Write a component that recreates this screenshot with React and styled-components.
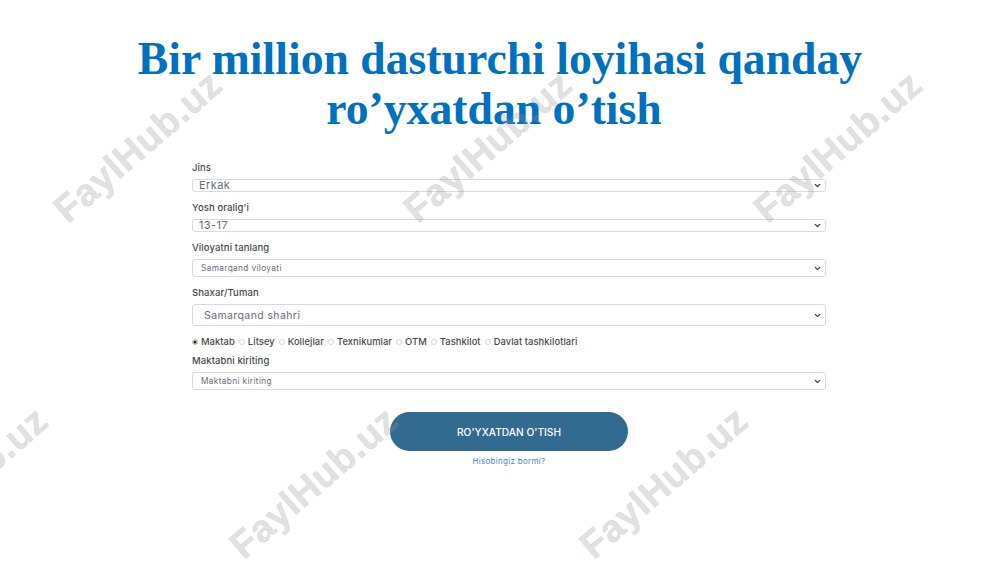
import styled, { createGlobalStyle } from "styled-components";
import { ChevronDown } from "lucide-react";

const GlobalStyle = createGlobalStyle`
  html, body {
    margin: 0;
    background: #fff;
  }
  body {
    width: 1000px;
    height: 562px;
    overflow: hidden;
  }
`;

const marks = [
  { x: 138, y: 147 },
  { x: 488, y: 147 },
  { x: 838, y: 147 },
  { x: -36, y: 483 },
  { x: 314, y: 483 },
  { x: 664, y: 483 },
];

const schools = ["Maktab", "Litsey", "Kollejlar", "Texnikumlar", "OTM", "Tashkilot", "Davlat tashkilotlari"];

const Field = ({ size, value }) => {
  return (
    <SelectBox>
      <Select $size={size} defaultValue={value}>
        <option>{value}</option>
      </Select>
      <Chevron size={9} strokeWidth={3.5} />
    </SelectBox>
  );
};

const App = () => {
  return (
    <Page>
      <GlobalStyle />
      <Title>
        Bir million dasturchi loyihasi qanday
        <SecondLine>ro’yxatdan o’tish</SecondLine>
      </Title>
      <Form>
        <Label>Jins</Label>
        <Field size="xs" value="Erkak" />
        <Label $top={9}>Yosh oralig'i</Label>
        <Field size="xs" value="13-17" />
        <Label $top={9}>Viloyatni tanlang</Label>
        <Field size="sm" value="Samarqand viloyati" />
        <Label $top={9}>Shaxar/Tuman</Label>
        <Field size="lg" value="Samarqand shahri" />
        <RadioRow>
          {schools.map((name, i) => (
            <RadioLabel key={name}>
              <Radio type="radio" name="school" defaultChecked={i === 0} />
              {name}
            </RadioLabel>
          ))}
        </RadioRow>
        <Label $top={6}>Maktabni kiriting</Label>
        <Field size="sm" value="Maktabni kiriting" />
        <Submit type="button">RO'YXATDAN O'TISH</Submit>
        <Login href="#">Hisobingiz bormi?</Login>
      </Form>
      {marks.map((m) => (
        <Watermark key={m.x} style={{ left: m.x, top: m.y }}>
          FaylHub.uz
        </Watermark>
      ))}
    </Page>
  );
};

export default App;

const Page = styled.div`
  position: relative;
  width: 1000px;
  height: 562px;
  overflow: hidden;
  padding-top: 34px;
  box-sizing: border-box;
  font-family: "Inter", "Liberation Sans", sans-serif;
`;

const Title = styled.h1`
  margin: 0;
  text-align: center;
  font-family: "Liberation Serif", serif;
  font-size: 45.7px;
  line-height: 50px;
  font-weight: 700;
  color: #0070c0;
`;

const SecondLine = styled.span`
  display: block;
  padding-right: 12px;
`;

const Form = styled.form`
  display: flex;
  flex-direction: column;
  width: 634px;
  margin: 27px 0 0 192px;
`;

const Label = styled.label`
  display: block;
  height: 13px;
  line-height: 13px;
  margin: ${(p) => p.$top || 0}px 0 5px;
  font-size: 9.5px;
  font-weight: 500;
  letter-spacing: 0.1px;
  color: #4a4a4a;
`;

const SelectBox = styled.div`
  position: relative;
  display: flex;
`;

const sizes = {
  xs: "height: 13px; font-size: 11px; padding: 0 0 1px 6px; letter-spacing: 0.4px; line-height: 1;",
  sm: "height: 18px; font-size: 8.3px; padding: 0 0 0 8px; letter-spacing: 0.35px; line-height: normal;",
  lg: "height: 22px; font-size: 10.5px; padding: 0 0 0 11px; letter-spacing: 0.4px; line-height: normal;",
};

const Select = styled.select`
  appearance: none;
  box-sizing: border-box;
  width: 100%;
  ${(p) => sizes[p.$size]}
  font-family: "Inter", "Liberation Sans", sans-serif;
  color: #666e76;
  background-color: #fff;
  border: 1px solid #d8dadd;
  border-radius: 3px;
`;

const Chevron = styled(ChevronDown)`
  position: absolute;
  right: 1px;
  top: 50%;
  margin: -4.5px 3px 0 0;
  color: #3c4045;
  pointer-events: none;
`;

const RadioRow = styled.div`
  display: flex;
  align-items: center;
  gap: 4px;
  height: 13px;
  margin-top: 9px;
`;

const RadioLabel = styled.label`
  display: flex;
  align-items: center;
  gap: 3px;
  font-size: 9.4px;
  font-weight: 500;
  letter-spacing: 0.06px;
  color: #4a4a4a;
`;

const Radio = styled.input`
  appearance: none;
  box-sizing: border-box;
  width: 6px;
  height: 6px;
  margin: 0;
  border: 1px solid #d5d5d5;
  border-radius: 50%;
  background: #fff;

  &:checked {
    border: 1px solid #ccc;
    background: #222;
    box-shadow: inset 0 0 0 0.5px #fff;
  }
`;

const Submit = styled.button`
  align-self: center;
  width: 238px;
  height: 39px;
  margin-top: 22px;
  border: none;
  border-radius: 20px;
  background: #326a90;
  color: #fff;
  font-family: "Inter", "Liberation Sans", sans-serif;
  font-size: 10.2px;
  font-weight: 500;
`;

const Login = styled.a`
  align-self: center;
  margin-top: 5px;
  font-size: 8px;
  line-height: 11px;
  letter-spacing: 0.3px;
  color: #4a80e0;
  text-decoration: none;
`;

const Watermark = styled.div`
  position: absolute;
  transform: translate(-50%, -50%) rotate(-41deg);
  font-family: "Liberation Sans", sans-serif;
  font-size: 38px;
  font-weight: 700;
  letter-spacing: 0.5px;
  white-space: nowrap;
  color: rgba(150, 150, 150, 0.28);
  -webkit-text-stroke: 0.5px rgba(150, 150, 150, 0.28);
  pointer-events: none;
`;
